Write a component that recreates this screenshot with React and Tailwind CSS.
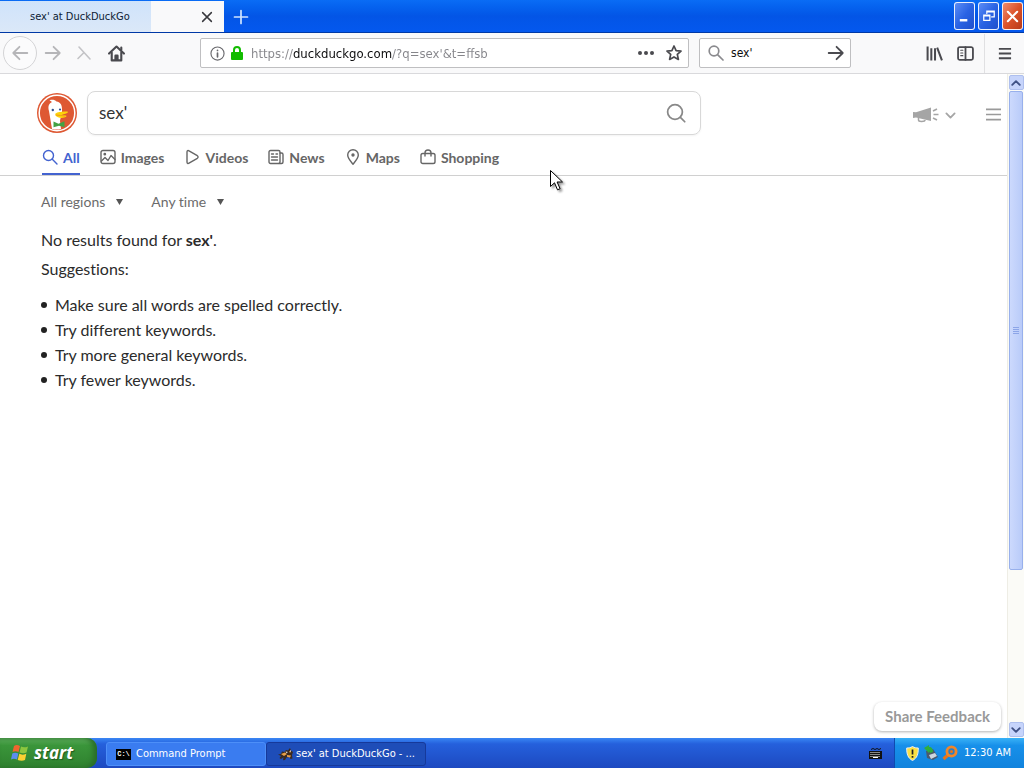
import React from "react";

const ui = "font-['DejaVu_Sans_Condensed','Noto_Sans',sans-serif]";

function Icon({ size = 16, className = "", children, sw = 1.5 }) {
  return (
    <svg width={size} height={size} viewBox="0 0 16 16" fill="none" stroke="currentColor" strokeWidth={sw} strokeLinecap="round" strokeLinejoin="round" className={`shrink-0 ${className}`} aria-hidden="true">
      {children}
    </svg>
  );
}

function TitleBar() {
  const winBtn = "flex h-7 w-[21px] items-center justify-center rounded-[3px] border border-white/90 text-white";
  return (
    <header className="flex h-[33px] shrink-0 items-end border-b border-[#0039a6] bg-linear-to-b from-[#0a6cf5] via-[#0355e6] to-[#0458ee]">
      <div className="flex h-[31px] w-56 items-start bg-[#f9f9fa]">
        <div className="flex h-[31px] w-[151px] items-center bg-linear-to-b from-[#cfe3fb] to-[#dbe8f8] pl-[30px] pt-[2px] text-[11px] text-[#0c1a33]">sex' at DuckDuckGo</div>
        <button aria-label="Close tab" className="ml-auto mr-2 flex h-[31px] w-[18px] items-center justify-center text-[#38383d]">
          <Icon size={14} sw={1.7}><path d="M3 3l10 10M13 3L3 13" /></Icon>
        </button>
      </div>
      <button aria-label="New tab" className="flex h-[31px] w-[34px] items-center justify-center text-[#cfe4ff]">
        <Icon size={16} sw={1.7}><path d="M8 1.5v13M1.5 8h13" /></Icon>
      </button>
      <div className="mb-[2px] ml-auto mr-px flex gap-[3px]">
        <button aria-label="Minimize" className={`${winBtn} bg-linear-to-br from-[#5b8cf5] via-[#2a63e4] to-[#1f50cc]`}>
          <Icon size={15} sw={2.6} ><path strokeLinecap="butt" d="M3 12h8" /></Icon>
        </button>
        <button aria-label="Restore" className={`${winBtn} bg-linear-to-br from-[#5b8cf5] via-[#2a63e4] to-[#1f50cc]`}>
          <Icon size={14} sw={1.4}><path strokeLinejoin="miter" d="M2 7h7v6H2zM2 8h7M5.500 5V2.500H14V9h-3M5.500 3.300H14" /></Icon>
        </button>
        <button aria-label="Close" className={`${winBtn} bg-linear-to-br from-[#f08a6c] via-[#dc5229] to-[#b83a18]`}>
          <Icon size={15} sw={2.2}><path d="M3 3l10 10M13 3L3 13" /></Icon>
        </button>
      </div>
    </header>
  );
}

function Toolbar() {
  return (
    <nav aria-label="Browser toolbar" className="flex h-[41px] shrink-0 items-center border-b border-[#d9d9dc] bg-[#f9f9fa] text-[#4a4a4f]">
      <button aria-label="Back" className="ml-[3px] flex size-[34px] items-center justify-center rounded-full border border-[#d4d4d6] bg-[#fbfbfc] text-[#b5b5b8]">
        <Icon size={18} sw={1.6}><path d="M14.500 8H2M7.500 2.500L2 8l5.500 5.500" /></Icon>
      </button>
      <button aria-label="Forward" className="ml-[7px] text-[#b5b5b8]">
        <Icon size={18} sw={1.6}><path d="M1.500 8H14M8.500 2.500L14 8l-5.500 5.500" /></Icon>
      </button>
      <button aria-label="Stop" className="ml-[14px] text-[#c3c3c6]">
        <Icon size={16} sw={1.6}><path d="M3 2l11 12M8 7.500L2 13.500" /></Icon>
      </button>
      <button aria-label="Home" className="ml-4">
        <Icon size={17} sw={2}><path d="M1 8l7-6.500L15 8" /><path d="M3.500 7v7.500h9V7" /><path d="M7 14v-4h2v4" /><path d="M12.500 2.500v2" /></Icon>
      </button>
      <div className="ml-[75px] flex h-[30px] min-w-0 flex-1 items-center rounded-xs border border-[#bfbfc1] bg-white">
        <Icon size={15} sw={1.200} className="ml-[9px] text-[#68686c]"><circle cx="8" cy="8" r="7" /><path strokeWidth="1.800" d="M8 7.500v4M8 4.600v.1" /></Icon>
        <svg width="12" height="14" viewBox="0 0 12 14" className="ml-[6px] shrink-0" aria-hidden="true">
          <path d="M3 6V4a3 3 0 016 0v2" fill="none" stroke="#12bc00" strokeWidth="2" />
          <rect y="6" width="12" height="8" rx="1" fill="#12bc00" />
        </svg>
        <input
          aria-label="Address"
          defaultValue="https://duckduckgo.com/?q=sex'&t=ffsb"
          className="ml-2 h-7 min-w-0 flex-1 bg-[linear-gradient(90deg,#85858a_42px,#0c0c0d_42px,#0c0c0d_141px,#85858a_141px)] bg-clip-text text-[13px] text-transparent outline-none"
        />
        <button aria-label="Page actions" className="ml-2">
          <svg width="16" height="16" viewBox="0 0 16 16" fill="currentColor" aria-hidden="true"><circle cx="2" cy="8" r="2" /><circle cx="8" cy="8" r="2" /><circle cx="14" cy="8" r="2" /></svg>
        </button>
        <button aria-label="Bookmark" className="ml-3 mr-[6px]">
          <Icon size={16} sw={1.700}><path d="M8 1l2.100 4.600 4.900.5-3.700 3.300 1.100 5L8 11.900l-4.400 2.500 1.100-5L1 6.100l4.900-.5z" /></Icon>
        </button>
      </div>
      <div className="ml-[10px] flex h-[30px] w-[152px] items-center rounded-xs border border-[#bfbfc1] bg-white">
        <Icon size={16} sw={1.700} className="ml-2 text-[#8a8a8e]"><circle cx="6" cy="6" r="4.800" /><path d="M9.800 9.800L15 15" /></Icon>
        <input aria-label="Search" defaultValue="sex'" className="ml-[7px] h-7 min-w-0 flex-1 bg-transparent text-[12px] text-[#0c0c0d] outline-none" />
        <button aria-label="Go" className="mr-[5px]">
          <Icon size={18} sw={1.600}><path d="M1.500 8H14M8.500 2.500L14 8l-5.500 5.500" /></Icon>
        </button>
      </div>
      <button aria-label="Library" className="ml-[75px]">
        <Icon size={17} sw={1.900}><path strokeLinecap="butt" d="M1.500 1.500v13M5 3v11.500M8.500 3v11.500M10.500 2.500l4.500 12" /></Icon>
      </button>
      <button aria-label="Sidebar" className="ml-[14px]">
        <Icon size={17} sw={1.700}><rect x="1" y="2" width="14" height="12" rx="1.500" /><path d="M8 2v12" /><path strokeWidth="1" d="M3.500 5H5.500M3.500 7.500H5.500M3.500 10H5.500" /></Icon>
      </button>
      <div className="ml-[10px] h-[39px] w-px bg-[#e0e0e2]" />
      <button aria-label="Menu" className="ml-3 mr-3">
        <Icon size={15} sw={2}><path strokeLinecap="butt" d="M2 3h13M2 8h13M2 13h13" /></Icon>
      </button>
    </nav>
  );
}

function DuckLogo() {
  return (
    <svg width="40" height="40" viewBox="0 0 40 40" className="block" role="img" aria-label="DuckDuckGo">
      <circle cx="20" cy="20" r="20" fill="#de5833" />
      <circle cx="20" cy="20" r="17.800" fill="none" stroke="#fff" strokeWidth="1.500" />
      <path d="M15 36L12 18c-1.200-4-.5-7.500 3-9l-2.500-1.800c3-1 5.500-.3 7 1.300C23 9 25 11.500 25 16v4c0 3-2 5-2 8l1 8A17 17 0 0115 36z" fill="#fff" />
      <path d="M18.500 20.500c2-2 5.500-1.500 8.500-2 2 0 4.500-.5 4 .8-.7 1.300-4 2-6 2.500 1 .8 4.500.3 4.500 1.500-1.500 1.800-6 2.200-8.500 1-2-.9-3.500-2-2.500-3.800z" fill="#fdd20a" />
      <path d="M19 22c3 .8 6.500.2 9 1" fill="none" stroke="#f29a1a" strokeWidth="1" />
      <path d="M16.500 28.500l5 2.200 6-2.500v6l-5.500-1.500-5.500 1.500z" fill="#43a244" />
      <circle cx="15.800" cy="17" r="1.200" fill="#2d4f8e" />
      <circle cx="23" cy="16.500" r="1.100" fill="#2d4f8e" />
    </svg>
  );
}

const tabs = [
  { label: "All", active: true, icon: <><circle cx="6.500" cy="6.500" r="5" /><path d="M10.300 10.300L15 15" /></> },
  { label: "Images", icon: <><rect x="1" y="1.500" width="14" height="13" rx="2" /><circle cx="4.800" cy="5.200" r=".7" /><path d="M1.500 12L5 8.500l3 3L11 6.500l4 4" /></> },
  { label: "Videos", icon: <path d="M3 3c0-1.400 1-1.800 2-1.200l8.300 4.900c1 .7 1 1.900 0 2.600L5 14.200c-1 .6-2 .2-2-1.200z" /> },
  { label: "News", icon: <><rect x="1" y="1.500" width="11" height="13" rx="1.500" /><path d="M12 4h1.500c1 0 1.500.5 1.500 1.500V13c0 1-.7 1.500-1.500 1.500H11M3.500 5h2M8 5h1.500M3.500 8h6M3.500 11h6" /></> },
  { label: "Maps", icon: <><path d="M8 15.200C5 11.500 2.700 9 2.700 6a5.300 5.300 0 0110.600 0c0 3-2.300 5.500-5.300 9.200z" /><circle cx="8" cy="6" r="1" fill="currentColor" /></> },
  { label: "Shopping", icon: <><rect x="1" y="4.500" width="14" height="10" rx="1.800" /><path d="M5 7V4a3 3 0 016 0v3" /></> },
];

function SearchPage() {
  return (
    <main className="min-w-0 flex-1 overflow-hidden bg-white font-[Lato,sans-serif] [font-variant-ligatures:none]">
      <div className="border-b border-[#d0d0d0] pt-[17px]">
        <div className="flex items-center pl-[37px] pr-[6px]">
          <a href="#home"><DuckLogo /></a>
          <form className="ml-[10px] flex h-11 w-[614px] items-center rounded-lg border border-[#d8d8d8] pl-[11px] pr-[14px] shadow-xs" onSubmit={(e) => e.preventDefault()}>
            <input aria-label="Search the web" defaultValue="sex'" className="min-w-0 flex-1 bg-transparent text-[17px] text-[#333] outline-none" />
            <button aria-label="Submit search" className="text-[#888]">
              <Icon size={20} sw={1.400}><circle cx="7.200" cy="7.200" r="5.900" /><path d="M11.500 11.500L15 15" /></Icon>
            </button>
          </form>
          <button aria-label="Announcements" className="ml-auto flex items-center pt-1 text-[#a5a5a5]">
            <svg width="26" height="16" viewBox="0 0 26 16" fill="currentColor" aria-hidden="true">
              <path d="M0 5l3 .3L18 0.500v13.500L3 10.500 0 11z" />
              <path d="M5.500 11v2c0 .8 1 1.500 3 1.500s3.500-.5 3.500-1.500" fill="none" stroke="currentColor" strokeWidth="1.500" />
              <path d="M20 4l4-2M20.500 7.500h5M20 11l4 2" fill="none" stroke="currentColor" strokeWidth="1.600" />
            </svg>
            <Icon size={11} sw={2.600} className="ml-[6px]"><path d="M2 5l6 6 6-6" /></Icon>
          </button>
          <button aria-label="Page menu" className="ml-[30px] pt-[2px] text-[#9a9a9a]">
            <Icon size={15} sw={1.700}><path strokeLinecap="butt" d="M0 2.500h16M0 8h16M0 13.500h16" /></Icon>
          </button>
        </div>
        <div className="mt-[5px] flex gap-5 pl-[42px] text-[14px] font-bold text-[#666]">
          {tabs.map((t) => (
            <a key={t.label} href={"#" + t.label.toLowerCase()} className={t.active ? "flex h-[35px] items-center gap-[5px] border-b-2 border-[#4363d0] pt-px text-[#4363d0]" : "flex h-[35px] items-center gap-[5px] border-b-2 border-transparent pt-px"}>
              <Icon size={16} sw={1.400}>{t.icon}</Icon>
              {t.label}
            </a>
          ))}
        </div>
      </div>
      <div className="pl-[41px] pt-4 text-[#2b2b2b]">
        <div className="flex gap-7 text-[14px] leading-5 text-[#6b6b6b]">
          {["All regions", "Any time"].map((f) => (
            <button key={f} className="flex items-center gap-[11px]">
              {f}
              <svg width="7" height="6" viewBox="0 0 7 6" aria-hidden="true"><path d="M0 0h7L3.500 6z" fill="#555" /></svg>
            </button>
          ))}
        </div>
        <p className="mt-4 text-[16px] leading-6">No results found for <b>sex'</b>.</p>
        <p className="mt-[5px] text-[16px] leading-6">Suggestions:</p>
        <ul className="mt-[11px] text-[16px] leading-[25px]">
          {["Make sure all words are spelled correctly.", "Try different keywords.", "Try more general keywords.", "Try fewer keywords."].map((s) => (
            <li key={s} className="flex items-center gap-2 before:size-[6px] before:rounded-full before:bg-[#222]">{s}</li>
          ))}
        </ul>
      </div>
    </main>
  );
}

function ScrollBar() {
  const end = "flex h-[15px] w-[15px] shrink-0 items-center justify-center rounded-[2px] border border-[#aebfee] bg-[#c6d4fb] text-[#3f5185]";
  return (
    <div className="flex w-[17px] shrink-0 flex-col items-center gap-px border-l border-[#eeede5] bg-[#fbfbf7] py-px">
      <button aria-label="Scroll up" className={end}><Icon size={10} sw={3}><path d="M2 11l6-6 6 6" /></Icon></button>
      <div className="flex min-h-0 w-full flex-1 flex-col items-center">
        <div className="flex h-[76%] w-[14px] flex-col items-center justify-center gap-px rounded-[2px] border border-[#98b0ec] bg-linear-to-r from-[#ccd9fd] to-[#b9cbf9]">
          {[0, 1, 2, 3].map((n) => <div key={n} className="h-px w-[6px] bg-[#8ca5e8]" />)}
        </div>
      </div>
      <button aria-label="Scroll down" className={end}><Icon size={10} sw={3}><path d="M2 5l6 6 6-6" /></Icon></button>
    </div>
  );
}

function Taskbar() {
  return (
    <footer className="flex h-[30px] shrink-0 items-stretch bg-linear-to-b from-[#3a86f4] via-[#2560dc] via-20% to-[#1d49c0] text-[11px] text-white">
      <button className="flex w-[97px] items-center gap-1 rounded-r-[10px] bg-linear-to-b from-[#5cad5c] via-[#3a953a] via-25% to-[#2f812f] pl-[11px] font-['Open_Sans',sans-serif] text-[17px] font-bold italic shadow-[inset_-4px_0_5px_#2a6e2a]">
        <svg width="19" height="18" viewBox="0 0 19 18" aria-hidden="true">
          <path d="M3 2c2-1.500 4-1 6 0L7.500 8c-2-1-4-1.300-6 0z" fill="#f0652f" />
          <path d="M10 2.500c2 1 4 1.200 7 0L15.500 8.500c-2.500 1.200-5 .7-7 0z" fill="#8cc63f" />
          <path d="M1.300 9.500c2-1.300 4-1 6 0L6 15.500c-2-1-4-1.300-6 0z" fill="#5b8def" />
          <path d="M8.300 9.800c2 1 4 1.200 7 0L14 16c-2.500 1.200-5 .7-7.300 0z" fill="#fbd033" />
        </svg>
        <span className="[text-shadow:1px_1px_1px_#1d5a1d]">start</span>
      </button>
      <button className="mb-[2px] mt-1 ml-[9px] flex w-[160px] items-center rounded-[3px] border border-[#4d8ff8] bg-[#3a7cf0] pl-[9px] text-left">
        <span className="mr-[5px] flex h-[11px] w-[15px] items-center justify-center bg-black font-['Liberation_Mono',monospace] text-[7px] font-bold leading-none">C:\</span>
        Command Prompt
      </button>
      <button className="mb-[2px] mt-1 flex w-[160px] items-center rounded-[3px] border border-[#16399a] bg-[#1e4db8] pl-[11px] text-left">
        <svg width="15" height="14" viewBox="0 0 15 14" className="mr-[3px]" aria-hidden="true">
          <path d="M0 7.500l3-.5 1-2.500L6.500 5 8 3l2 .5L12 1l1 2.500L15 5l-1 3 .5 3.500-2 .5-1-2-3 .5L7 13l-2 .3.500-3L3 12l-1.500-1L3 9z" fill="#3a2a20" />
          <path d="M3 7l4-1.500 2 1.500-3 2zM9 8l4 .5-1 2-3-.8zM11 4l2 .5-1 1.500z" fill="#e8a04a" /><path d="M7.500 4.500l2.500.5-1.500 1zM12 4l1-1v2z" fill="#fff" />
        </svg>
        sex' at DuckDuckGo - ...
      </button>
      <div className="ml-auto flex items-center pr-[12px]">
        <svg width="13" height="12" viewBox="0 0 13 12" role="img" aria-label="Keyboard"><path d="M2 2.500l2-1 2 1 2-1 2 1 2-1" stroke="#111" fill="none" /><rect y="4" width="13" height="8" fill="#111" /><path d="M1.500 5.500h10M1.500 7.500h10M1.500 9.500h10" stroke="#fff" strokeDasharray="1 1" /><path d="M4 10.500h5" stroke="#fff" /></svg>
      </div>
      <div className="flex items-center border-l border-[#0f4bb0] bg-linear-to-b from-[#38b2f6] via-[#1790ea] via-25% to-[#1183dd] pl-[11px] pr-[13px]">
        <svg width="13" height="15" viewBox="0 0 13 15" role="img" aria-label="Security alert"><path d="M6.500.5C4.500 1.800 2.500 2 .7 2c0 6 1 10 5.800 12.500C11.300 12 12.300 8 12.300 2c-1.800 0-3.800-.2-5.800-1.500z" fill="#fbe042" stroke="#e9edf5" /><path d="M6.500 3.500v5M6.500 10v1.700" stroke="#222" strokeWidth="1.700" /></svg>
        <svg width="15" height="16" viewBox="0 0 15 16" className="ml-[5px]" role="img" aria-label="Safely remove hardware"><path d="M2 6l7-2 5 8-5 3-6-2z" fill="#4b5a6d" /><path d="M5 10l6-2 2 3-6 3z" fill="#cdd6df" /><path d="M0 3l5-3v2c3 0 4 2 4 5L6 8 5 6v2z" fill="#2fae3c" /></svg>
        <svg width="16" height="16" viewBox="0 0 16 16" className="ml-[3px]" role="img" aria-label="Search tool"><path d="M6.500 9.500L1.500 14" stroke="#e8741a" strokeWidth="3.200" /><circle cx="9.500" cy="6.500" r="4.600" fill="#2d7fc4" stroke="#f0862a" strokeWidth="2.800" /><circle cx="9.500" cy="6.500" r="1.500" fill="#e8741a" /></svg>
        <span className="ml-[6px] whitespace-nowrap">12:30 AM</span>
      </div>
    </footer>
  );
}

export default function App() {
  return (
    <div className={`relative flex h-screen flex-col overflow-hidden ${ui}`}>
      <TitleBar />
      <Toolbar />
      <div className="relative flex min-h-0 flex-1">
        <SearchPage />
        <ScrollBar />
        <button className="absolute bottom-[7px] right-[23px] h-[29px] rounded-lg bg-white px-[11px] font-[Lato,sans-serif] text-[15px] font-bold text-[#999] shadow-[0_1px_3px_rgba(0,0,0,0.3)]">Share Feedback</button>
      </div>
      <Taskbar />
      <svg width="14" height="22" viewBox="0 0 14 22" className="pointer-events-none absolute left-[550px] top-[170px] drop-shadow-[2px_2px_1px_rgba(0,0,0,0.4)]" aria-hidden="true">
        <path d="M.5.5v16l4-3.700 3 7 2.600-1.100-3-6.700h5.400z" fill="#fff" stroke="#000" />
      </svg>
    </div>
  );
}
